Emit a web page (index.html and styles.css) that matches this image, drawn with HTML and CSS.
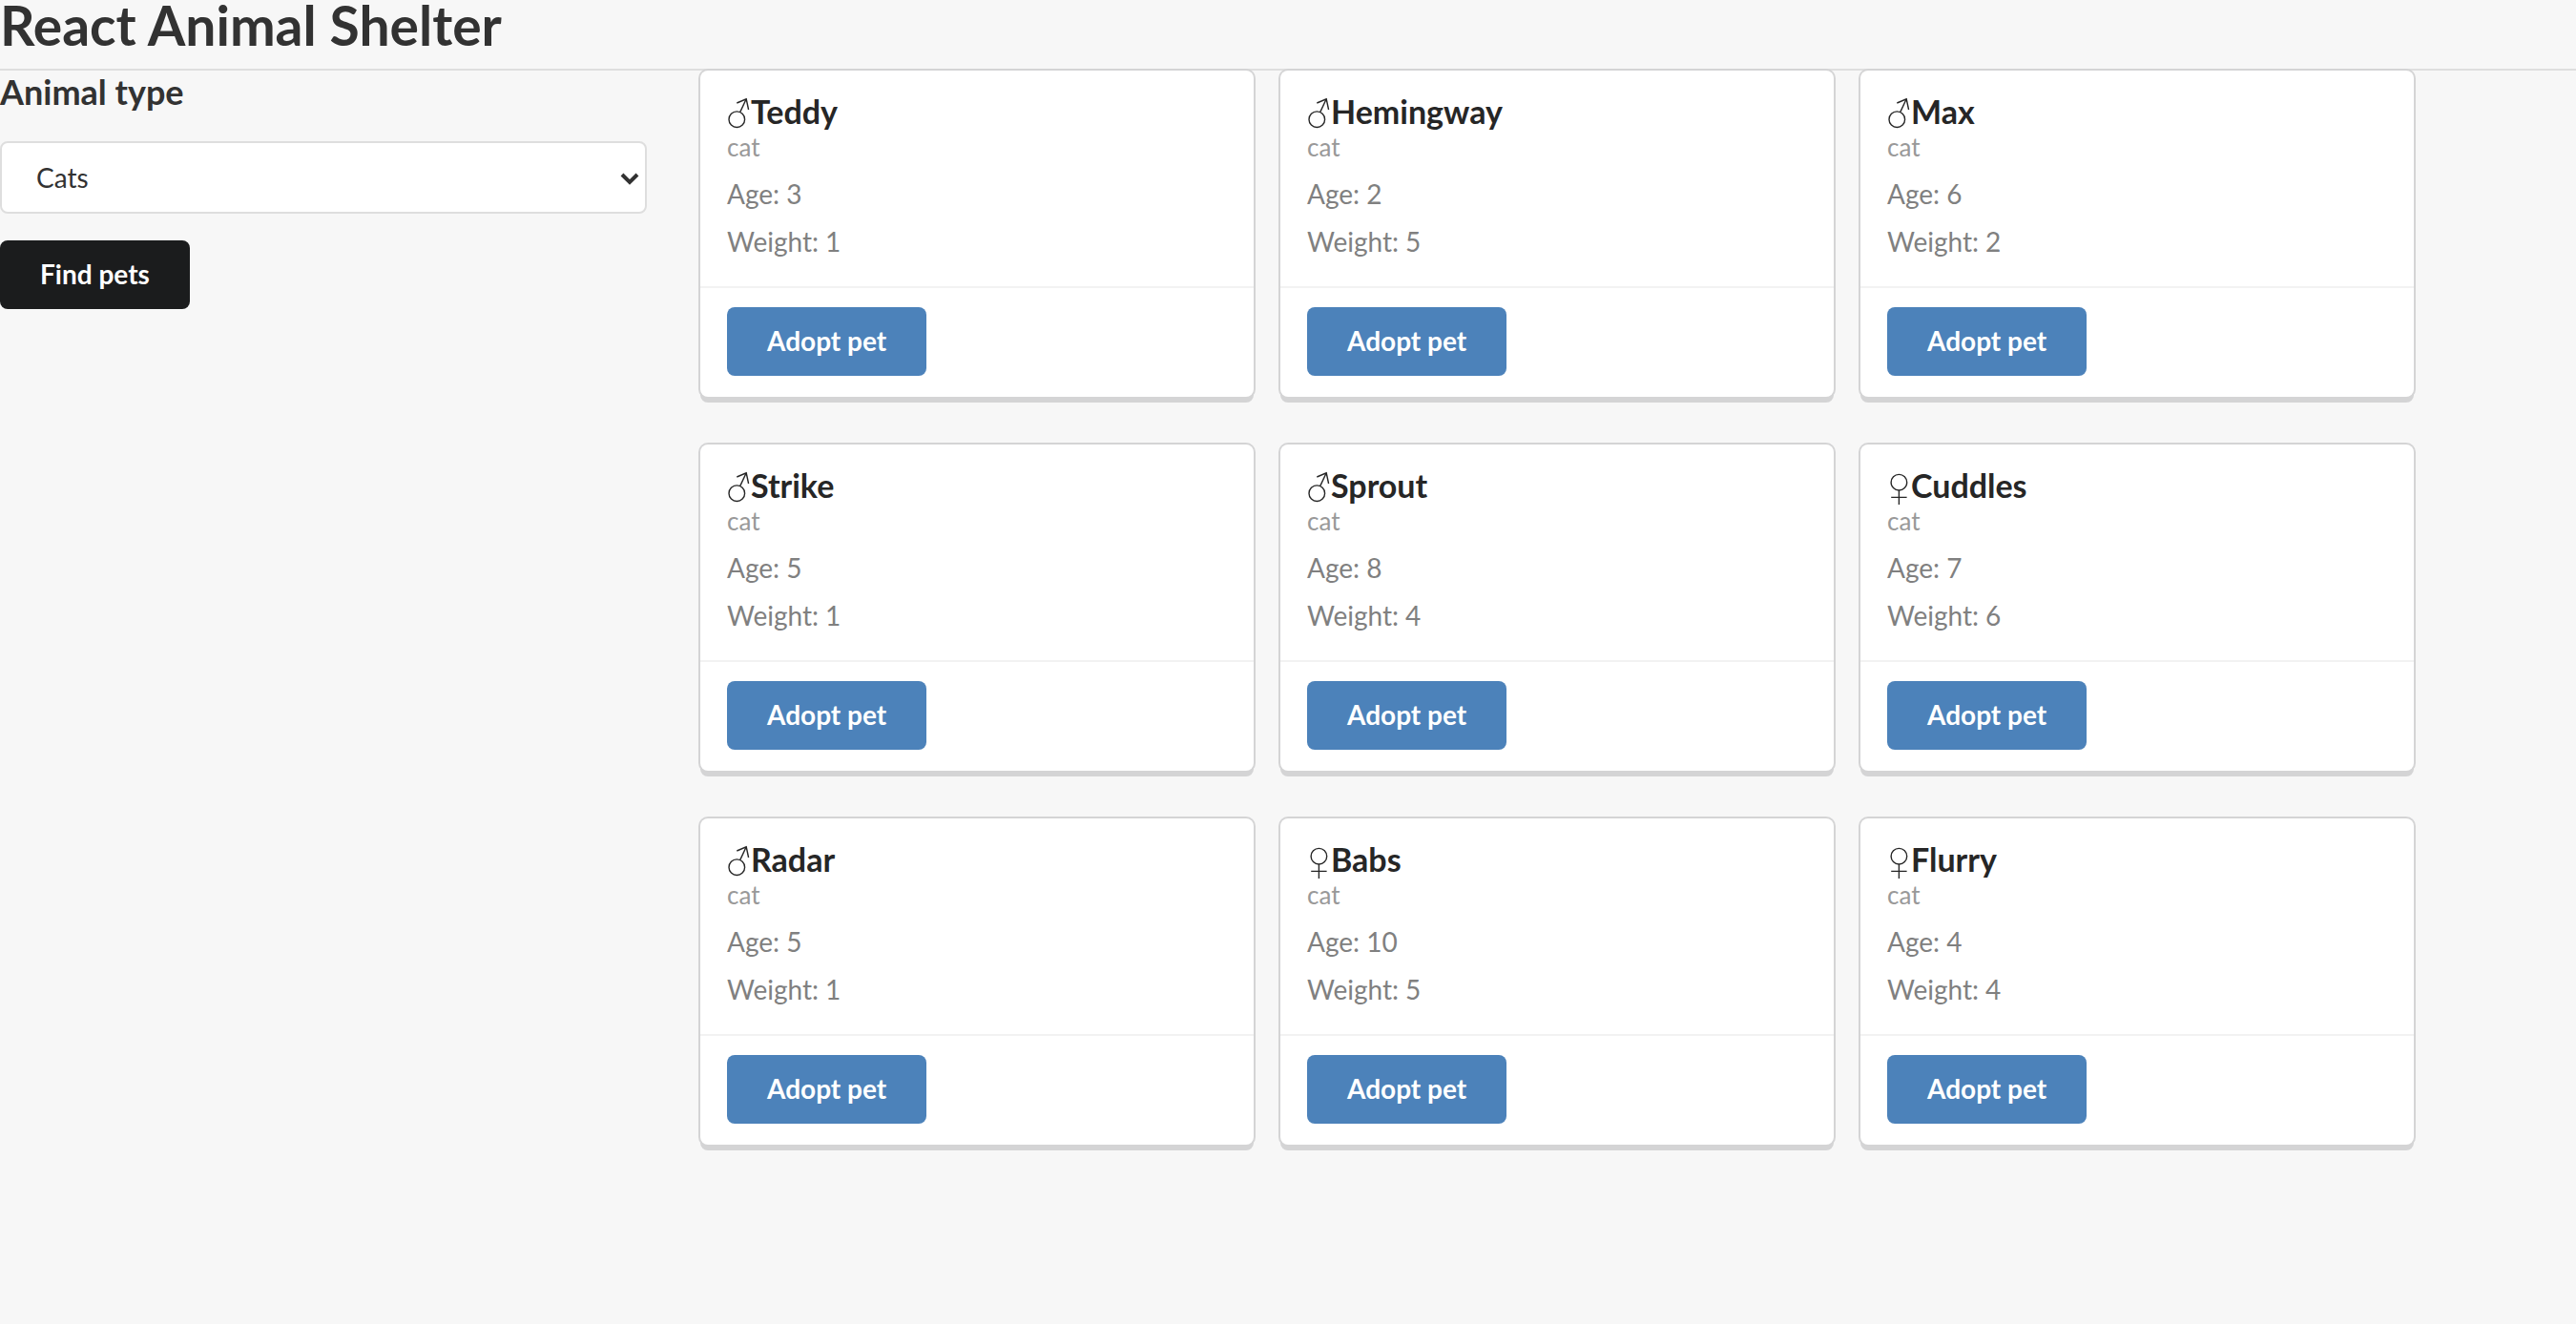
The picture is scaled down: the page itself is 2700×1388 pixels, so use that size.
FILE: index.html
```html
<!DOCTYPE html>
<html lang="en">
<head>
<meta charset="utf-8">
<title>React Animal Shelter</title>
<link rel="stylesheet" href="styles.css">
</head>
<body>
<svg class="sprite" aria-hidden="true">
  <symbol id="male" viewBox="0 0 25 38"><circle cx="10.3" cy="25.2" r="8.3"/><path d="M13.8 17.4L20.2 3.8M10.3 8L20.2 3.8L22.6 15"/></symbol>
  <symbol id="female" viewBox="0 0 25 38"><circle cx="12.4" cy="13.7" r="8.3"/><path d="M12.4 22V37M4.2 29.4H20.6"/></symbol>
</svg>
<header class="page-header"><h1 class="title">React Animal Shelter</h1></header>
<div class="layout">
  <form class="filters">
    <h3 class="filters-title"><label for="type">Animal type</label></h3>
    <div class="select-wrap">
      <select class="select" id="type" name="type">
        <option>All</option>
        <option selected>Cats</option>
        <option>Dogs</option>
        <option>Micropigs</option>
      </select>
      <svg class="chevron" viewBox="0 0 20 14" aria-hidden="true"><path d="M2 3L10 11L18 3"/></svg>
    </div>
    <button class="button button-dark" type="button">Find pets</button>
  </form>
  <main class="cards">
    <article class="card">
      <div class="content">
        <h2 class="name"><svg class="gender" role="img" aria-label="male"><use href="#male"/></svg>Teddy</h2>
        <p class="meta">cat</p>
        <p class="fact">Age: 3</p>
        <p class="fact">Weight: 1</p>
      </div>
      <div class="extra"><button class="button" type="button">Adopt pet</button></div>
    </article>
    <article class="card">
      <div class="content">
        <h2 class="name"><svg class="gender" role="img" aria-label="male"><use href="#male"/></svg>Hemingway</h2>
        <p class="meta">cat</p>
        <p class="fact">Age: 2</p>
        <p class="fact">Weight: 5</p>
      </div>
      <div class="extra"><button class="button" type="button">Adopt pet</button></div>
    </article>
    <article class="card">
      <div class="content">
        <h2 class="name"><svg class="gender" role="img" aria-label="male"><use href="#male"/></svg>Max</h2>
        <p class="meta">cat</p>
        <p class="fact">Age: 6</p>
        <p class="fact">Weight: 2</p>
      </div>
      <div class="extra"><button class="button" type="button">Adopt pet</button></div>
    </article>
    <article class="card">
      <div class="content">
        <h2 class="name"><svg class="gender" role="img" aria-label="male"><use href="#male"/></svg>Strike</h2>
        <p class="meta">cat</p>
        <p class="fact">Age: 5</p>
        <p class="fact">Weight: 1</p>
      </div>
      <div class="extra"><button class="button" type="button">Adopt pet</button></div>
    </article>
    <article class="card">
      <div class="content">
        <h2 class="name"><svg class="gender" role="img" aria-label="male"><use href="#male"/></svg>Sprout</h2>
        <p class="meta">cat</p>
        <p class="fact">Age: 8</p>
        <p class="fact">Weight: 4</p>
      </div>
      <div class="extra"><button class="button" type="button">Adopt pet</button></div>
    </article>
    <article class="card">
      <div class="content">
        <h2 class="name"><svg class="gender" role="img" aria-label="female"><use href="#female"/></svg>Cuddles</h2>
        <p class="meta">cat</p>
        <p class="fact">Age: 7</p>
        <p class="fact">Weight: 6</p>
      </div>
      <div class="extra"><button class="button" type="button">Adopt pet</button></div>
    </article>
    <article class="card">
      <div class="content">
        <h2 class="name"><svg class="gender" role="img" aria-label="male"><use href="#male"/></svg>Radar</h2>
        <p class="meta">cat</p>
        <p class="fact">Age: 5</p>
        <p class="fact">Weight: 1</p>
      </div>
      <div class="extra"><button class="button" type="button">Adopt pet</button></div>
    </article>
    <article class="card">
      <div class="content">
        <h2 class="name"><svg class="gender" role="img" aria-label="female"><use href="#female"/></svg>Babs</h2>
        <p class="meta">cat</p>
        <p class="fact">Age: 10</p>
        <p class="fact">Weight: 5</p>
      </div>
      <div class="extra"><button class="button" type="button">Adopt pet</button></div>
    </article>
    <article class="card">
      <div class="content">
        <h2 class="name"><svg class="gender" role="img" aria-label="female"><use href="#female"/></svg>Flurry</h2>
        <p class="meta">cat</p>
        <p class="fact">Age: 4</p>
        <p class="fact">Weight: 4</p>
      </div>
      <div class="extra"><button class="button" type="button">Adopt pet</button></div>
    </article>
  </main>
</div>
</body>
</html>
```
FILE: styles.css
```css
* {
  box-sizing: border-box;
}

body {
  min-height: 100vh;
  margin: 0;
  background: #f7f7f7;
  color: #323232;
  font-family: Lato, "Liberation Sans", sans-serif;
  font-size: 28px;
  line-height: 40px;
}

h1, h2, h3, p {
  margin: 0;
}

.sprite {
  display: none;
}

.page-header {
  padding-bottom: 16px;
  border-bottom: 2px solid #dedede;
}

.title {
  font-size: 57px;
  line-height: 56px;
  margin-top: -2px;
  padding-bottom: 2px;
}

.layout {
  display: flex;
  align-items: flex-start;
  gap: 56px;
  padding-bottom: 50px;
}

.filters {
  flex: 0 0 calc(25% + 3px);
  padding-top: 4px;
}

.filters-title {
  margin-bottom: 34px;
  font-size: 36px;
  line-height: 36px;
}

.select-wrap {
  position: relative;
  margin-bottom: 28px;
}

.select {
  display: block;
  width: 100%;
  height: 76px;
  padding: 0 36px;
  border: 2px solid #dedede;
  border-radius: 8px;
  background: #fff;
  color: #323232;
  font: inherit;
  appearance: none;
}

.chevron {
  position: absolute;
  top: 32px;
  right: 8px;
  width: 20px;
  height: 14px;
  fill: none;
  stroke: #323232;
  stroke-width: 4;
  pointer-events: none;
}

.button {
  display: block;
  padding: 21px 42px 23px;
  border: 0;
  border-radius: 8px;
  background: #4c82ba;
  color: #fff;
  font: bold 28px/28px Lato, "Liberation Sans", sans-serif;
}

.button-dark {
  background: #1b1c1d;
}

.cards {
  display: flex;
  flex: 1;
  flex-wrap: wrap;
  gap: 50px 28px;
}

.card {
  width: 580px;
  border-radius: 8px;
  background: #fff;
  box-shadow: 0 6px 0 0 #d4d4d5, 0 0 0 2px #d4d4d5;
}

.content {
  padding: 25px 28px 27px;
}

.name {
  display: flex;
  height: 36px;
  color: #262626;
  font-size: 34px;
  line-height: 36px;
}

.gender {
  width: 25px;
  height: 38px;
  margin-top: 1px;
  fill: none;
  stroke: #262626;
  stroke-width: 1.4;
}

.meta {
  color: #999;
  font-size: 26px;
  line-height: 38px;
}

.fact {
  margin-top: 10px;
  color: #808080;
}

.extra {
  padding: 20px 28px 22px;
  border-top: 2px solid #f2f2f2;
}
```
